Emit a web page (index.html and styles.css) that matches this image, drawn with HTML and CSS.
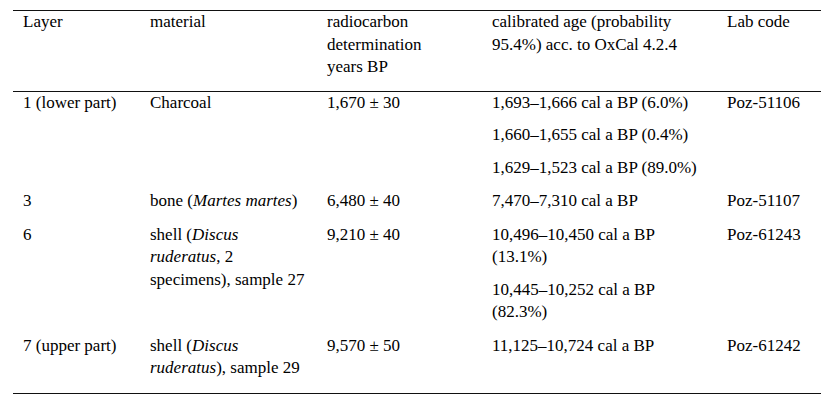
FILE: index.html
```html
<!DOCTYPE html>
<html lang="en">
<head>
<meta charset="utf-8">
<title>Radiocarbon dates</title>
<link rel="stylesheet" href="styles.css">
</head>
<body>
<table class="dates">
  <colgroup>
    <col class="c-layer">
    <col class="c-mat">
    <col class="c-rc">
    <col class="c-cal">
    <col class="c-lab">
  </colgroup>
  <thead>
    <tr>
      <th><p>Layer</p></th>
      <th><p>material</p></th>
      <th><p>radiocarbon determination<br>years BP</p></th>
      <th><p>calibrated age (probability 95.4%) acc. to OxCal 4.2.4</p></th>
      <th><p>Lab code</p></th>
    </tr>
  </thead>
  <tbody>
    <tr>
      <td><p>1 (lower part)</p></td>
      <td><p>Charcoal</p></td>
      <td><p>1,670 ± 30</p></td>
      <td>
        <p>1,693–1,666 cal a BP (6.0%)</p>
        <p>1,660–1,655 cal a BP (0.4%)</p>
        <p>1,629–1,523 cal a BP (89.0%)</p>
      </td>
      <td><p>Poz-51106</p></td>
    </tr>
    <tr>
      <td><p>3</p></td>
      <td><p>bone (<i>Martes martes</i>)</p></td>
      <td><p>6,480 ± 40</p></td>
      <td><p>7,470–7,310 cal a BP</p></td>
      <td><p>Poz-51107</p></td>
    </tr>
    <tr>
      <td><p>6</p></td>
      <td><p>shell (<i>Discus ruderatus</i>, 2 specimens), sample 27</p></td>
      <td><p>9,210 ± 40</p></td>
      <td>
        <p>10,496–10,450 cal a BP (13.1%)</p>
        <p>10,445–10,252 cal a BP (82.3%)</p>
      </td>
      <td><p>Poz-61243</p></td>
    </tr>
    <tr>
      <td><p>7 (upper part)</p></td>
      <td><p>shell (<i>Discus ruderatus</i>), sample 29</p></td>
      <td><p>9,570 ± 50</p></td>
      <td><p>11,125–10,724 cal a BP</p></td>
      <td><p>Poz-61242</p></td>
    </tr>
  </tbody>
</table>
</body>
</html>
```

FILE: styles.css
```css
body {
  margin: 0;
  background: #ffffff;
}

.dates {
  margin: 10px 0 0 13px;
  width: 808px;
  border-collapse: collapse;
  table-layout: fixed;
  font-family: "Liberation Serif", "Times New Roman", serif;
  font-size: 17px;
  line-height: 22.5px;
  color: #000000;
}

.c-layer { width: 127px; }
.c-mat { width: 177px; }
.c-rc { width: 165px; }
.c-cal { width: 235px; }
.c-lab { width: 104px; }

.dates th,
.dates td {
  padding: 0 10px 1px;
  vertical-align: top;
  text-align: left;
  font-weight: normal;
}

.dates thead th {
  border-top: 1px solid #111111;
  border-bottom: 1px solid #111111;
  padding-bottom: 2px;
}

.dates tbody tr:last-child td {
  border-bottom: 1px solid #111111;
  padding-bottom: 3px;
}

.dates p {
  margin: 0 0 10px;
}
```
